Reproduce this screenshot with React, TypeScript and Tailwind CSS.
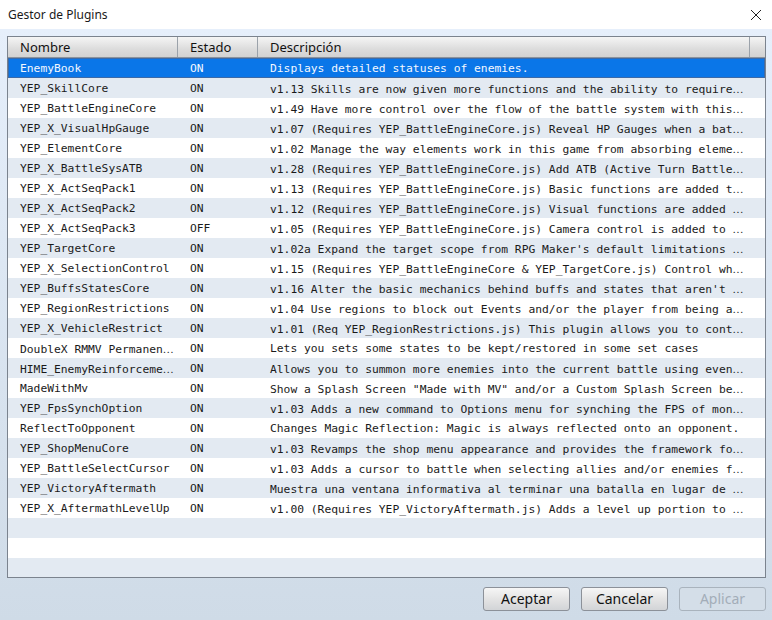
import React from 'react';

interface Plugin { name: string; status: string; desc: string }

const plugins: Plugin[] = [
  { name: 'EnemyBook', status: 'ON', desc: 'Displays detailed statuses of enemies.' },
  { name: 'YEP_SkillCore', status: 'ON', desc: 'v1.13 Skills are now given more functions and the ability to require⋯' },
  { name: 'YEP_BattleEngineCore', status: 'ON', desc: 'v1.49 Have more control over the flow of the battle system with this⋯' },
  { name: 'YEP_X_VisualHpGauge', status: 'ON', desc: 'v1.07 (Requires YEP_BattleEngineCore.js) Reveal HP Gauges when a bat⋯' },
  { name: 'YEP_ElementCore', status: 'ON', desc: 'v1.02 Manage the way elements work in this game from absorbing eleme⋯' },
  { name: 'YEP_X_BattleSysATB', status: 'ON', desc: 'v1.28 (Requires YEP_BattleEngineCore.js) Add ATB (Active Turn Battle⋯' },
  { name: 'YEP_X_ActSeqPack1', status: 'ON', desc: 'v1.13 (Requires YEP_BattleEngineCore.js) Basic functions are added t⋯' },
  { name: 'YEP_X_ActSeqPack2', status: 'ON', desc: 'v1.12 (Requires YEP_BattleEngineCore.js) Visual functions are added ⋯' },
  { name: 'YEP_X_ActSeqPack3', status: 'OFF', desc: 'v1.05 (Requires YEP_BattleEngineCore.js) Camera control is added to ⋯' },
  { name: 'YEP_TargetCore', status: 'ON', desc: "v1.02a Expand the target scope from RPG Maker's default limitations ⋯" },
  { name: 'YEP_X_SelectionControl', status: 'ON', desc: 'v1.15 (Requires YEP_BattleEngineCore & YEP_TargetCore.js) Control wh⋯' },
  { name: 'YEP_BuffsStatesCore', status: 'ON', desc: "v1.16 Alter the basic mechanics behind buffs and states that aren't ⋯" },
  { name: 'YEP_RegionRestrictions', status: 'ON', desc: 'v1.04 Use regions to block out Events and/or the player from being a⋯' },
  { name: 'YEP_X_VehicleRestrict', status: 'ON', desc: 'v1.01 (Req YEP_RegionRestrictions.js) This plugin allows you to cont⋯' },
  { name: 'DoubleX RMMV Permanen⋯', status: 'ON', desc: 'Lets you sets some states to be kept/restored in some set cases' },
  { name: 'HIME_EnemyReinforceme⋯', status: 'ON', desc: 'Allows you to summon more enemies into the current battle using even⋯' },
  { name: 'MadeWithMv', status: 'ON', desc: 'Show a Splash Screen "Made with MV" and/or a Custom Splash Screen be⋯' },
  { name: 'YEP_FpsSynchOption', status: 'ON', desc: 'v1.03 Adds a new command to Options menu for synching the FPS of mon⋯' },
  { name: 'ReflectToOpponent', status: 'ON', desc: 'Changes Magic Reflection: Magic is always reflected onto an opponent.' },
  { name: 'YEP_ShopMenuCore', status: 'ON', desc: 'v1.03 Revamps the shop menu appearance and provides the framework fo⋯' },
  { name: 'YEP_BattleSelectCursor', status: 'ON', desc: 'v1.03 Adds a cursor to battle when selecting allies and/or enemies f⋯' },
  { name: 'YEP_VictoryAftermath', status: 'ON', desc: 'Muestra una ventana informativa al terminar una batalla en lugar de ⋯' },
  { name: 'YEP_X_AftermathLevelUp', status: 'ON', desc: 'v1.00 (Requires YEP_VictoryAftermath.js) Adds a level up portion to ⋯' },
];

const EMPTY_ROWS = 3;

// el "⋯" se pinta con la fuente CJK, como en el original
function Cut({ text }: { text: string }) {
  if (!text.endsWith('⋯')) return <>{text}</>;
  return (
    <>
      {text.slice(0, -1)}
      <span className="font-['Noto_Sans_CJK_JP',sans-serif] text-[10px]">⋯</span>
    </>
  );
}

export default function App() {
  return (
    <div className="w-[772px] h-[620px] flex flex-col overflow-hidden font-['Noto_Sans',sans-serif]">
      {/* Barra de título */}
      <div className="h-[29px] bg-white flex items-center justify-between pl-2 pr-[10px] shrink-0">
        <span className="text-[12px] text-[#1a1a1a]">Gestor de Plugins</span>
        <svg width="12" height="12" viewBox="0 0 12 12" className="text-[#222]">
          <path d="M1 1 L11 11 M11 1 L1 11" stroke="currentColor" strokeWidth="1" />
        </svg>
      </div>

      {/* Cuerpo */}
      <div className="flex-1 flex flex-col bg-[linear-gradient(to_bottom,#e6effb,#cfdbe7)] pt-[7px] pl-[7px] pr-[6px]">
        <div className="h-[542px] border border-[#7b838e] bg-white flex flex-col overflow-hidden">
          {/* Cabecera */}
          <div className="h-[21px] shrink-0 flex border-b border-[#8a929c] bg-[linear-gradient(to_bottom,#f5f5f5,#dcdcdc_60%,#d2d2d2)] text-[13px] text-[#111] leading-[20px]">
            <div className="w-[170px] pl-3 border-r border-[#9ba2aa]">Nombre</div>
            <div className="w-[80px] pl-3 border-r border-[#9ba2aa]">Estado</div>
            <div className="w-[492px] pl-3 border-r border-[#9ba2aa]">Descripción</div>
            <div className="flex-1" />
          </div>

          {/* Filas */}
          <div className="flex-1 overflow-hidden font-['DejaVu_Sans_Mono',monospace] text-[11.3px] leading-[20px]">
            {plugins.map((p, i) => (
              <div
                key={p.name}
                className={
                  i === 0
                    ? 'h-5 flex bg-[#0a76e8] text-[#f4f8ff] border border-[#3c6aa8]'
                    : i % 2 === 1
                      ? 'h-5 flex bg-[#e3eaf2] text-[#1a1a1a]'
                      : 'h-5 flex bg-white text-[#1a1a1a]'
                }
              >
                <div className={i === 0 ? 'w-[169px] pl-[11px] whitespace-nowrap overflow-hidden leading-[19px]' : 'w-[170px] pl-3 whitespace-nowrap overflow-hidden leading-[21px]'}>
                  <Cut text={p.name} />
                </div>
                <div className={i === 0 ? 'w-[80px] pl-3 leading-[19px]' : 'w-[80px] pl-3 leading-[21px]'}>{p.status}</div>
                <div className={i === 0 ? 'flex-1 pl-3 whitespace-nowrap overflow-hidden leading-[19px]' : 'flex-1 pl-3 whitespace-nowrap overflow-hidden leading-[21px]'}>
                  <Cut text={p.desc} />
                </div>
              </div>
            ))}
            {Array.from({ length: EMPTY_ROWS }).map((_, j) => (
              <div
                key={j}
                className={(plugins.length + j) % 2 === 1 ? 'h-5 bg-[#e3eaf2]' : 'h-5 bg-white'}
              />
            ))}
          </div>
        </div>

        {/* Botones */}
        <div className="flex justify-end gap-[11px] mt-[9px] text-[14px]">
          <button className="w-[87px] h-[24px] rounded-[3px] border border-[#8c9199] bg-[linear-gradient(to_bottom,#f6f6f6,#e4e4e4_50%,#d2d4d7)] text-[#111] leading-[22px]">
            Aceptar
          </button>
          <button className="w-[87px] h-[24px] rounded-[3px] border border-[#8c9199] bg-[linear-gradient(to_bottom,#f6f6f6,#e4e4e4_50%,#d2d4d7)] text-[#111] leading-[22px]">
            Cancelar
          </button>
          <button disabled className="w-[87px] h-[24px] rounded-[3px] border border-[#a9b3bd] bg-[#d4dee8] text-[#a3adb8] leading-[22px]">
            Aplicar
          </button>
        </div>
      </div>
    </div>
  );
}
